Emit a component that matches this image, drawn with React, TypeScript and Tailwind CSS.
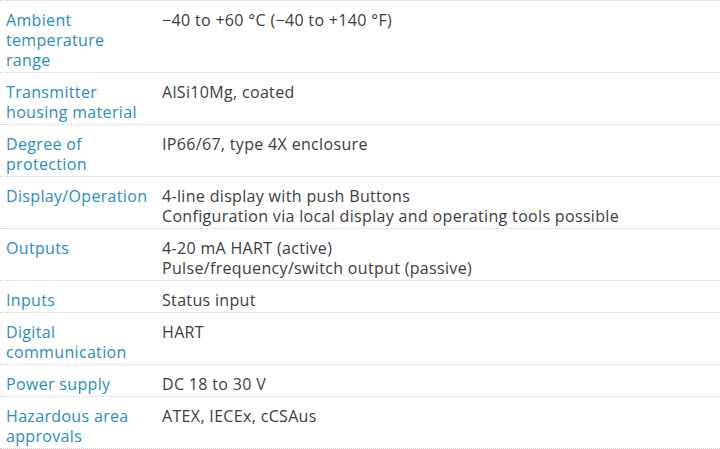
const rows: { label: string; value: string[] }[] = [
  { label: "Ambient temperature range", value: ["\u221240 to +60 \u00b0C (\u221240 to +140 \u00b0F)"] },
  { label: "Transmitter housing material", value: ["AlSi10Mg, coated"] },
  { label: "Degree of protection", value: ["IP66/67, type 4X enclosure"] },
  {
    label: "Display/Operation",
    value: ["4-line display with push Buttons", "Configuration via local display and operating tools possible"],
  },
  { label: "Outputs", value: ["4-20 mA HART (active)", "Pulse/frequency/switch output (passive)"] },
  { label: "Inputs", value: ["Status input"] },
  { label: "Digital communication", value: ["HART"] },
  { label: "Power supply", value: ["DC 18 to 30 V"] },
  { label: "Hazardous area approvals", value: ["ATEX, IECEx, cCSAus"] },
];

export default function App() {
  return (
    <div className="h-[449px] w-[720px] overflow-hidden bg-white font-['Open_Sans',sans-serif] text-[16px] leading-5 tracking-[0.33px]">
      <div className="border-t border-dotted border-[#cfcfcf]">
        {rows.map((row) => (
          <div key={row.label} className="flex border-b border-dotted border-[#cfcfcf] pt-[9px] pb-[2px]">
            <div className="w-[162px] shrink-0 pl-[6px] pr-[12px] text-[#2b8cc2]">{row.label}</div>
            <div className="text-[#3a3d40]">
              {row.value.map((line) => (
                <div key={line}>{line}</div>
              ))}
            </div>
          </div>
        ))}
      </div>
    </div>
  );
}
